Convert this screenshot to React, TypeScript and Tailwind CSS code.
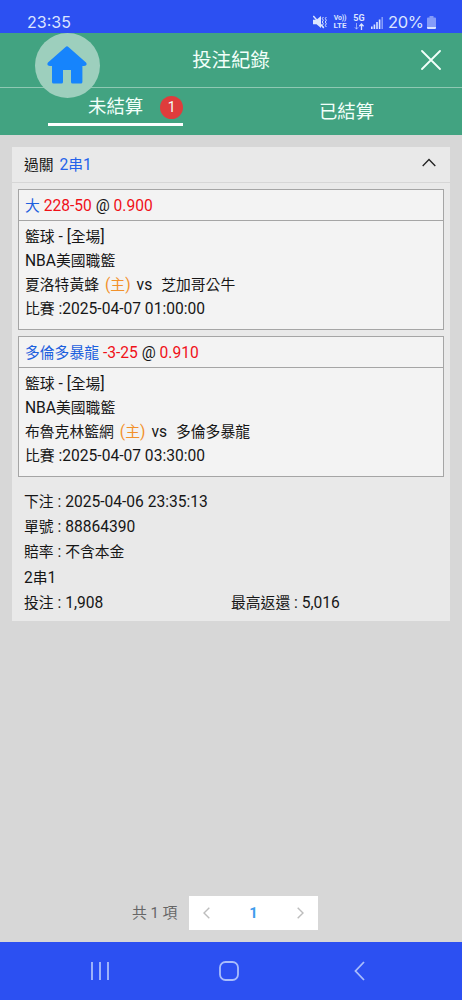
import type { ReactNode } from 'react'

type Leg = {
  pick: string
  line: string
  odds: string
  home: string
  away: string
  time: string
}

const LEGS: Leg[] = [
  { pick: '大', line: '228-50', odds: '0.900', home: '夏洛特黃蜂', away: '芝加哥公牛', time: '2025-04-07 01:00:00' },
  { pick: '多倫多暴龍', line: '-3-25', odds: '0.910', home: '布魯克林籃網', away: '多倫多暴龍', time: '2025-04-07 03:30:00' },
]

// Chinese text is set a touch smaller than the latin text around it
function Zh({ children }: { children: ReactNode }) {
  return <span className="text-[14.8px]">{children}</span>
}

function StatusBar() {
  return (
    <div className="flex h-[33px] shrink-0 items-start justify-between bg-[#2c50f2] pl-[27px] pr-[26px] pt-[11px] text-[#dbe5ff]">
      <span className="font-['Inter',sans-serif] text-[16px] leading-[23px]">23:35</span>
      <div className="flex h-[23px] items-center">
        <svg className="-mt-0.5" width="14" height="14" viewBox="0 0 14 14" fill="none" stroke="#dbe5ff">
          <path d="M0 4.800h3.500L8 1v12L3.500 9.200H0z" fill="#dbe5ff" stroke="none" />
          <path d="M.3 1l10.500 12" strokeWidth="1.4" />
          <path d="M10.300 2l-1 1.600 1 1.600-1 1.800 1 1.800-1 1.600 1 1.600M13.300 2l-1 1.600 1 1.600-1 1.800 1 1.800-1 1.600 1 1.600" strokeWidth="1" />
        </svg>
        <div className="-mt-0.5 ml-[6px] flex w-[14px] flex-col items-center text-[8px] font-bold">
          <span className="whitespace-nowrap text-[7px] leading-[8px] tracking-[-0.2px]">Vo))</span>
          <span className="leading-[8px]">LTE</span>
        </div>
        <div className="-mt-0.5 ml-[6px] flex w-[12px] flex-col items-center text-[9px] font-bold leading-[8px]">
          5G
          <svg className="mt-px" width="10" height="7" viewBox="0 0 10 7" fill="none" stroke="#dbe5ff">
            <path d="M2.500 0v6M.8 4.200l1.700 2 1.700-2" opacity=".6" />
            <path d="M7.500 7V1M5.400 3.200L7.500 1l2.100 2.200" strokeWidth="1.3" />
          </svg>
        </div>
        <svg className="ml-[6px]" width="12" height="12" viewBox="0 0 12 12" fill="#dbe5ff">
          <path d="M0 9.500h1.600V12H0zM2.600 7.500h1.600V12H2.600zM5.200 5h1.600v7H5.200zM7.800 2.500h1.600V12H7.800z" />
          <path d="M10.400 0H12v12h-1.600z" opacity=".5" />
        </svg>
        <span className="ml-[5px] w-[37px] whitespace-nowrap font-['Inter',sans-serif] text-[16.5px] leading-[23px] tracking-[-0.3px]">20%</span>
        <svg className="ml-[2px]" width="9" height="13" viewBox="0 0 9 13" fill="#dbe5ff">
          <path d="M2.500 0h4v1.500H8A1 1 0 0 1 9 2.500V10H0V2.500a1 1 0 0 1 1-1h1.500z" opacity=".5" />
          <path d="M0 10.500h9V12a1 1 0 0 1-1 1H1a1 1 0 0 1-1-1z" />
        </svg>
      </div>
    </div>
  )
}

function HomeButton() {
  return (
    <button className="absolute left-[35px] top-[33px] flex size-[64.5px] items-center justify-center rounded-full bg-[#9dcfbd]">
      <svg width="40" height="38" viewBox="0 0 40 38" fill="#1684fc">
        <path d="M18.600.9a2 2 0 0 1 2.800 0L39 16.600c.9.9.7 2.200-.2 3-.7.500-1.600.4-2.400.4h-1V36A1.500 1.500 0 0 1 33.900 37.500H25.500A1.500 1.500 0 0 1 24 36V24h-8v12a1.500 1.500 0 0 1-1.500 1.500H6.500A1.500 1.500 0 0 1 5 36V20H3.600c-.8 0-1.700.1-2.400-.4-.9-.8-1.100-2.100-.2-3z" />
      </svg>
    </button>
  )
}

function Header() {
  return (
    <header className="shrink-0 bg-[#42a381] text-[#f2fffa]">
      <div className="flex h-[55px] items-center justify-between border-b border-[#8fc8b3] pr-[21px]">
        <span className="w-[41px]" />
        <h1 className="pt-0.5 text-[19.4px]">投注紀錄</h1>
        <svg width="20" height="20" viewBox="0 0 20 20" fill="none" stroke="currentColor" strokeWidth="1.8" strokeLinecap="round">
          <path d="M1 1l18 18M19 1L1 19" />
        </svg>
      </div>
      <div className="flex h-[47px] text-[18.4px]">
        <div className="flex w-1/2 justify-center">
          <div className="flex h-[38px] w-[135px] items-center border-b-3 border-white pl-[40px] pt-[3px]">
            <span className="whitespace-nowrap">未結算</span>
            <span className="ml-[17px] flex size-[23px] shrink-0 items-center justify-center rounded-full bg-[#df3c3c] text-[14px]">1</span>
          </div>
        </div>
        <div className="flex w-1/2 items-center justify-center">已結算</div>
      </div>
    </header>
  )
}

function LegBox({ leg }: { leg: Leg }) {
  return (
    <div className="h-[141px] border border-[#a5a5a5] bg-[#f3f3f3]">
      <div className="h-[31px] border-b border-[#a5a5a5] pl-[6px] leading-[32px]">
        <span className="text-[#1c60de]"><Zh>{leg.pick}</Zh></span> <span className="text-[#f01018]">{leg.line}</span> @{' '}
        <span className="text-[#f01018]">{leg.odds}</span>
      </div>
      <div className="pl-[6px] pt-1 leading-6">
        <p><Zh>籃球</Zh> - [<Zh>全場</Zh>]</p>
        <p>NBA<Zh>美國職籃</Zh></p>
        <p className="flex">
          <Zh>{leg.home}</Zh>
          <span className="ml-[6px] text-[#f2912b]">(<Zh>主</Zh>)</span>
          <span className="ml-[6px]">vs</span>
          <span className="ml-[9px]"><Zh>{leg.away}</Zh></span>
        </p>
        <p><Zh>比賽</Zh> :{leg.time}</p>
      </div>
    </div>
  )
}

function Row({ label, children }: { label: string; children: ReactNode }) {
  return (
    <p>
      <Zh>{label}</Zh> : {children}
    </p>
  )
}

function BetCard() {
  return (
    <section className="h-[474px] bg-[#e9e9e9]">
      <div className="flex h-9 items-center justify-between border-b border-[#d6d6d6] pl-3 pr-[14px]">
        <div className="pt-[3px]">
          <Zh>過關</Zh> <span className="ml-0.5 text-[#2462ea]">2<Zh>串</Zh>1</span>
        </div>
        <svg className="-mt-1" width="14" height="9" viewBox="0 0 14 9" fill="none" stroke="#222" strokeWidth="1.3">
          <path d="M.7 8L7 1.500 13.300 8" />
        </svg>
      </div>
      <div className="flex flex-col gap-[6px] px-[6px] pt-[6px]">
        {LEGS.map((leg) => (
          <LegBox key={leg.time} leg={leg} />
        ))}
      </div>
      <div className="pl-3 pt-[13px] leading-[25.2px]">
        <Row label="下注">2025-04-06 23:35:13</Row>
        <Row label="單號">88864390</Row>
        <Row label="賠率"><Zh>不含本金</Zh></Row>
        <p>2<Zh>串</Zh>1</p>
        <div className="flex">
          <div className="w-[207px]">
            <Row label="投注">1,908</Row>
          </div>
          <Row label="最高返還">5,016</Row>
        </div>
      </div>
    </section>
  )
}

function Pager() {
  return (
    <div className="flex h-[34px] items-center pl-[120px] text-[14.8px] text-[#666]">
      <span className="w-[57px] whitespace-nowrap">共 1 項</span>
      <div className="flex h-[34px] w-[129px] items-center justify-between bg-white px-[14px]">
        <svg width="7" height="12" viewBox="0 0 7 12" fill="none" stroke="#bdbdbd" strokeWidth="1.4">
          <path d="M6.300.7L1 6l5.300 5.300" />
        </svg>
        <span className="font-bold text-[#409cec]">1</span>
        <svg width="7" height="12" viewBox="0 0 7 12" fill="none" stroke="#bdbdbd" strokeWidth="1.4">
          <path d="M.7.7L6 6 .7 11.300" />
        </svg>
      </div>
    </div>
  )
}

function NavBar() {
  return (
    <nav className="flex h-[58px] shrink-0 items-center bg-[#2c50f2] pl-[91px]">
      <svg width="18" height="20" viewBox="0 0 18 20" stroke="#a9bdfb" strokeWidth="1.8">
        <path d="M1 1v18M9 1v18M17 1v18" />
      </svg>
      <svg className="ml-[110px]" width="20" height="20" viewBox="0 0 20 20" fill="none" stroke="#a9bdfb" strokeWidth="1.8">
        <rect x="1" y="1" width="18" height="18" rx="5.500" />
      </svg>
      <svg className="ml-[115px]" width="11" height="20" viewBox="0 0 11 20" fill="none" stroke="#a9bdfb" strokeWidth="1.8">
        <path d="M10 1L1.500 10l8.500 9" />
      </svg>
    </nav>
  )
}

export default function App() {
  return (
    <div className="relative flex h-[1000px] w-[462px] flex-col bg-[#d7d7d7] font-['Roboto','Noto_Sans_CJK_TC',sans-serif] text-[15.6px] text-[#161616]">
      <StatusBar />
      <Header />
      <main className="flex flex-1 flex-col justify-between px-3 pb-3 pt-3">
        <BetCard />
        <Pager />
      </main>
      <NavBar />
      <HomeButton />
    </div>
  )
}
